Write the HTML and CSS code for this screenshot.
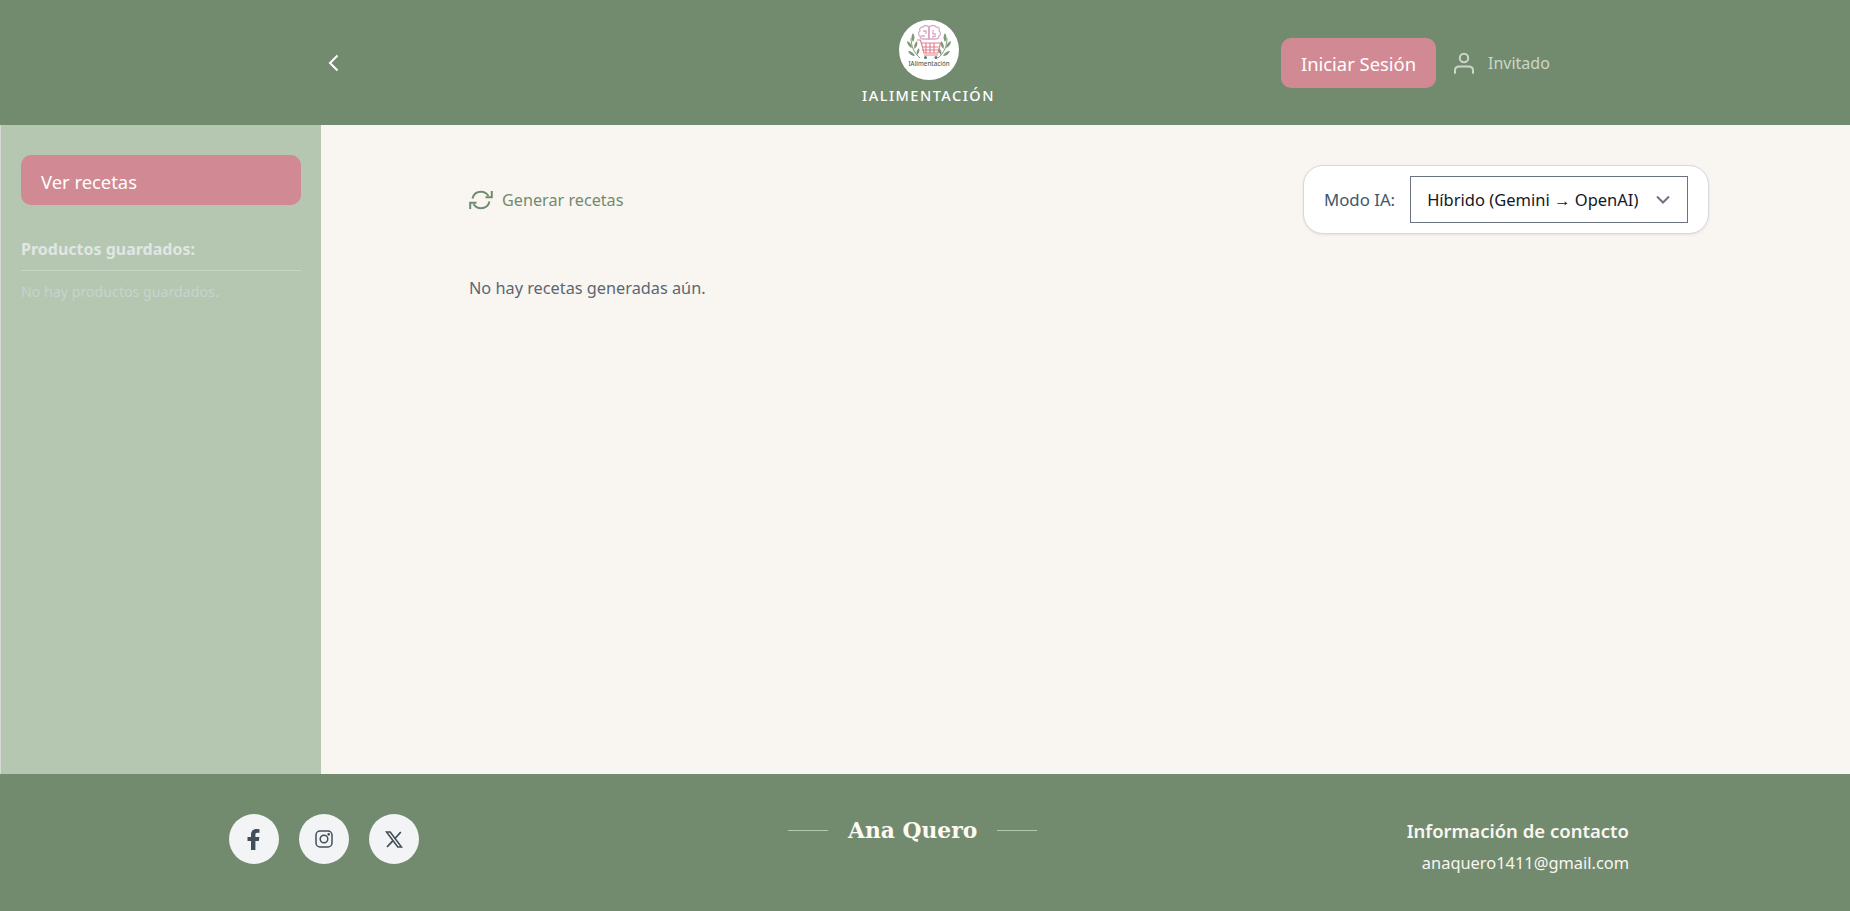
FILE: index.html
```html
<!DOCTYPE html>
<html lang="es">
<head>
    <meta charset="UTF-8">
    <meta name="viewport" content="width=device-width, initial-scale=1.0">
    <title>IAlimentación</title>
    <link rel="stylesheet" href="styles.css">
</head>
<body>
    <header class="header">
        <button class="back-btn" aria-label="Volver">
            <svg width="12" height="18" viewBox="0 0 12 18" fill="none" stroke="#fff" stroke-width="2"><path d="M10.500 1.500 3 9l7.500 7.500"/></svg>
        </button>
        <div class="brand">
            <div class="logo">
                <svg width="60" height="60" viewBox="0 0 60 60" fill="none">
                    <!-- cerebro -->
                    <g stroke="#d8a9c8" stroke-width="1.300">
                        <path d="M30 7c-2-2-5-2-6 0-3 0-4 2-3 4-2 1-2 4 0 5 0 2 2 3 4 3h5z"/>
                        <path d="M30 7c2-2 6-2 7 0 3 0 4 2 3 4 2 1 2 4 0 5 0 2-2 3-4 3h-6z"/>
                        <path d="M30 7v12M24 11h3v3M22 16h4M34 10v4h3M33 17l4-1"/>
                    </g>
                    <!-- carrito -->
                    <g stroke="#e0808f" stroke-width="1.200">
                        <path d="M18 20h3.500l3.500 13h14l2.500-10H22.500"/>
                        <path d="M23.500 27h16M23 30h16M27 23v10M31 23v10M35 23v10M25 35h14"/>
                    </g>
                    <circle cx="26.500" cy="37.500" r="1.500" fill="#5f7a5c"/>
                    <circle cx="37" cy="37.500" r="1.500" fill="#5f7a5c"/>
                    <!-- ramas -->
                    <g stroke="#7f9a78" stroke-width="1">
                        <path d="M12 18c0 8 3 15 9 20M48 18c0 8-3 15-9 20"/>
                    </g>
                    <g fill="#7f9a78">
                        <path d="M14 13c2 3 2 6 0 9-2-3-2-6 0-9zM8 21c3 1 5 4 5 7-3-1-5-4-5-7zM18 21c1 3 0 6-2.500 8-1-3 0-6 2.500-8zM9 31c3 0 6 2 7 5-3 0-6-2-7-5zM20 28c1 3 0 5-2 7-1-3 0-5 2-7z"/>
                        <path d="M46 13c-2 3-2 6 0 9 2-3 2-6 0-9zM52 21c-3 1-5 4-5 7 3-1 5-4 5-7zM42 21c-1 3 0 6 2.500 8 1-3 0-6-2.500-8zM51 31c-3 0-6 2-7 5 3 0 6-2 7-5zM40 28c-1 3 0 5 2 7 1-3 0-5-2-7z"/>
                    </g>
                    <text x="30" y="46" class="logo-text" text-anchor="middle">IAlimentación</text>
                </svg>
            </div>
            <span class="brand-name">IALIMENTACIÓN</span>
        </div>
        <div class="auth">
            <button class="pink-btn login-btn">Iniciar Sesión</button>
            <svg class="user-icon" width="24" height="24" viewBox="0 0 24 24" fill="none" stroke="#cdd6c9" stroke-width="2" stroke-linecap="round"><circle cx="12" cy="7" r="4.200"/><path d="M3 22v-2.500c0-2.500 2-4 4.500-4h9c2.500 0 4.500 1.500 4.500 4V22"/></svg>
            <span class="guest">Invitado</span>
        </div>
    </header>

    <div class="middle">
        <aside class="sidebar">
            <button class="pink-btn side-btn">Ver recetas</button>
            <h3 class="saved-title">Productos guardados:</h3>
            <p class="saved-empty">No hay productos guardados.</p>
        </aside>
        <main class="content">
            <div class="toolbar">
                <button class="generate-btn">
                    <svg width="24" height="20" viewBox="0 0 24 20" fill="none" stroke="#728b6f" stroke-width="2"><path d="M3.500 8.500C4.500 4.500 7.800 1.800 12 1.800c3.200 0 5.800 1.500 7.500 4.200"/><path d="M22.800 1v6.200h-6.300"/><path d="M20.500 11.500c-1 4-4.300 6.700-8.500 6.700-3.200 0-5.800-1.500-7.500-4.200"/><path d="M1.200 19v-6.200h6.300"/></svg>
                    Generar recetas
                </button>
                <div class="mode-box">
                    <label class="mode-label">Modo IA:</label>
                    <div class="mode-select">
                        <span>Híbrido (Gemini <span class="arrow">→</span> OpenAI)</span>
                        <svg width="14" height="9" viewBox="0 0 14 9" fill="none" stroke="#6b7280" stroke-width="2"><path d="m1 1.500 6 6 6-6"/></svg>
                    </div>
                </div>
            </div>
            <p class="empty-msg">No hay recetas generadas aún.</p>
        </main>
    </div>

    <footer class="footer">
        <div class="social">
            <a class="social-link" href="#" aria-label="Facebook">
                <svg width="14" height="21" viewBox="0 0 14 21" fill="#414f58"><path d="M4 21V12H.5V8H4V5.500C4 2 6 0 9.200 0c1.400 0 2.800.2 3.300.3v3.500h-2c-1.700 0-2.100.9-2.100 2V8h4l-.6 4H8.400v9z"/></svg>
            </a>
            <a class="social-link" href="#" aria-label="Instagram">
                <svg width="18" height="18" viewBox="0 0 18 18" fill="none" stroke="#414f58" stroke-width="1.500"><rect x="1" y="1" width="16" height="16" rx="4"/><circle cx="9" cy="9" r="3.800"/><circle cx="13.700" cy="4.300" r=".6" fill="#414f58"/></svg>
            </a>
            <a class="social-link" href="#" aria-label="X">
                <svg width="18" height="17" viewBox="0 0 18 17" fill="none" stroke="#414f58"><path stroke-width="1.600" d="M1.500 1h3.700l11.300 15h-3.700z"/><path stroke-width="1.800" d="M15.800 1 10 7.500M8 9.700 2 16"/></svg>
            </a>
        </div>
        <div class="signature">
            <span class="sig-line"></span>
            <span class="sig-name">Ana Quero</span>
            <span class="sig-line"></span>
        </div>
        <div class="contact">
            <h4 class="contact-title">Información de contacto</h4>
            <p class="contact-mail">anaquero1411@gmail.com</p>
        </div>
    </footer>
</body>
</html>
```

FILE: styles.css
```css
* {
    box-sizing: border-box;
}
body {
    margin: 0;
    height: 911px;
    display: flex;
    flex-direction: column;
    font-family: "Noto Sans", "Open Sans", sans-serif;
    background-color: #f9f6f1;
    overflow: hidden;
}
button {
    font-family: inherit;
    border: none;
    background: none;
    padding: 0;
}
.header {
    height: 125px;
    flex-shrink: 0;
    display: flex;
    align-items: center;
    padding-left: 327px;
    background-color: #728b6f;
}
.back-btn {
    display: flex;
    width: 12px;
}
.brand {
    display: flex;
    flex-direction: column;
    align-items: center;
    width: 131px;
    margin-left: 524px;
    margin-top: -1px;
}
.logo {
    width: 60px;
    height: 60px;
    border-radius: 50%;
    background-color: #fff;
}
.logo svg {
    display: block;
}
.logo-text {
    font-size: 6.200px;
    font-weight: 500;
    fill: #55654f;
}
.brand-name {
    margin-top: 5px;
    font-size: 14.500px;
    font-weight: 500;
    letter-spacing: 1.500px;
    color: #fff;
    white-space: nowrap;
}
.auth {
    display: flex;
    align-items: center;
    margin-left: 287px;
}
.pink-btn {
    background-color: #d18a94;
    color: #fff;
    border-radius: 10px;
    font-size: 18.400px;
    height: 50px;
    padding-top: 2px;
}
.login-btn {
    width: 155px;
}
.user-icon {
    margin-left: 16px;
}
.guest {
    margin-left: 12px;
    padding-top: 1px;
    font-size: 16px;
    color: #cdd6c9;
}
.middle {
    flex: 1;
    display: flex;
    min-height: 0;
}
.sidebar {
    width: 321px;
    flex-shrink: 0;
    padding: 30px 20px 0 20px;
    background-color: #b5c7b1;
    border-left: 1px solid #d4d9d2;
}
.side-btn {
    display: block;
    width: 100%;
    padding-left: 20px;
    text-align: left;
}
.saved-title {
    margin: 33px 0 0;
    padding-bottom: 10px;
    border-bottom: 1px solid #c8d6c4;
    font-size: 16px;
    font-weight: 700;
    color: #e0e6e3;
}
.saved-empty {
    margin: 11px 0 0;
    font-size: 14.200px;
    color: #c7d3cc;
}
.content {
    flex: 1;
    padding: 40px 141px 0 148px;
}
.toolbar {
    display: flex;
    align-items: flex-start;
    justify-content: space-between;
}
.generate-btn {
    display: flex;
    align-items: center;
    gap: 9px;
    margin-top: 24px;
    font-size: 16.200px;
    color: #728b6f;
}
.mode-box {
    display: flex;
    align-items: center;
    height: 69px;
    width: 406px;
    padding: 0 20px;
    gap: 15px;
    background-color: #fff;
    border: 1px solid #d6d8dc;
    border-radius: 20px;
    box-shadow: 0 1px 3px rgba(0, 0, 0, 0.08);
}
.mode-label {
    font-size: 16.800px;
    color: #40566c;
}
.mode-select {
    flex: 1;
    height: 47px;
    display: flex;
    align-items: center;
    justify-content: space-between;
    padding: 0 17px 0 16px;
    border: 1px solid #6b7280;
    font-size: 16.500px;
    color: #111827;
}
.arrow {
    font-family: "Liberation Sans", sans-serif;
}
.empty-msg {
    margin: 43px 0 0;
    font-size: 16.300px;
    color: #5b6675;
}
.footer {
    height: 137px;
    flex-shrink: 0;
    display: flex;
    align-items: flex-start;
    padding: 40px 221px 0 229px;
    background-color: #728b6f;
}
.social {
    display: flex;
    gap: 20px;
}
.social-link {
    display: flex;
    align-items: center;
    justify-content: center;
    width: 50px;
    height: 50px;
    border-radius: 50%;
    background-color: #f3f4f6;
}
.signature {
    display: flex;
    align-items: center;
    gap: 20px;
    margin: 4px 0 0 369px;
}
.sig-line {
    width: 40px;
    height: 1px;
    background-color: #b5c7b1;
}
.sig-name {
    font-family: "DejaVu Serif", serif;
    font-size: 21.800px;
    font-weight: 700;
    color: #fdfaf3;
}
.contact {
    margin-left: auto;
    text-align: right;
}
.contact-title {
    margin: 4px 0 0;
    font-size: 18.500px;
    font-weight: 600;
    color: #f9f6f1;
}
.contact-mail {
    margin: 8px 0 0;
    font-size: 16.400px;
    color: #f9f6f1;
}
```
